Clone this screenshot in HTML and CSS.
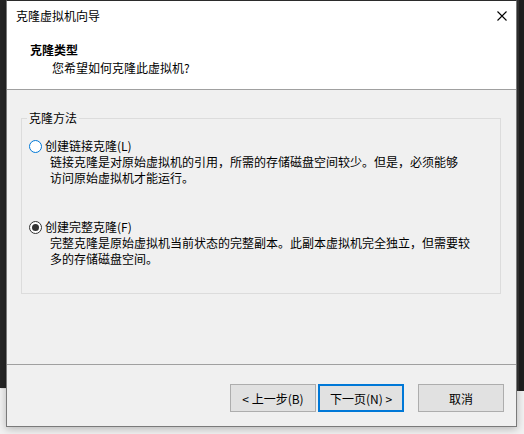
FILE: index.html
```html
<!DOCTYPE html>
<html>
<head>
    <meta charset="utf-8">
    <link rel="stylesheet" href="styles.css">
</head>
<body>
    <!-- windows behind the dialog -->
    <div class="backwin backwin-left"></div>
    <div class="backwin backwin-right"></div>

    <div class="dialog">
        <div class="titlebar">
            <span class="title">克隆虚拟机向导</span>
            <svg class="close" width="10" height="10" viewBox="0 0 10 10">
                <path d="M0.5 0.5 L9.5 9.5 M9.5 0.5 L0.5 9.5" stroke="#000" stroke-width="1.1" fill="none"/>
            </svg>
        </div>

        <div class="header">
            <div class="header-title">克隆类型</div>
            <div class="header-sub">您希望如何克隆此虚拟机?</div>
        </div>

        <div class="body">
            <fieldset class="group">
                <legend>克隆方法</legend>

                <div class="option first">
                    <div class="option-label">
                        <span class="radio hover"></span>
                        <span>创建链接克隆(L)</span>
                    </div>
                    <div class="option-desc">链接克隆是对原始虚拟机的引用，所需的存储磁盘空间较少。但是，必须能够<br>访问原始虚拟机才能运行。</div>
                </div>

                <div class="option second">
                    <div class="option-label">
                        <span class="radio checked"></span>
                        <span>创建完整克隆(F)</span>
                    </div>
                    <div class="option-desc">完整克隆是原始虚拟机当前状态的完整副本。此副本虚拟机完全独立，但需要较<br>多的存储磁盘空间。</div>
                </div>
            </fieldset>
        </div>

        <div class="footer">
            <button class="button">&lt; 上一步(B)</button>
            <button class="button default">下一页(N) &gt;</button>
            <button class="button cancel">取消</button>
        </div>
    </div>
</body>
</html>
```

FILE: styles.css
```css
body {
    margin: 0;
    width: 524px;
    height: 434px;
    background: #f2f2f2;
    font-family: "Noto Sans CJK SC", "Microsoft YaHei UI", sans-serif;
    font-size: 12px;
    color: #000;
    overflow: hidden;
    position: relative;
}
.backwin {
    position: absolute;
    top: 0;
    background: #262626;
}
.backwin-left {
    left: 0;
    width: 6px;
    height: 388px;
    box-shadow: 1px 0 1px rgba(0,0,0,0.4);
}
.backwin-right {
    left: 516px;
    width: 8px;
    height: 391px;
    background: linear-gradient(to right, #333 0, #333 3px, #1f1f1f 3px);
}
.dialog {
    position: absolute;
    left: 6px;
    top: 0;
    width: 511px;
    height: 427px;
    box-sizing: border-box;
    border: 1px solid #7a7a7a;
    border-top-color: #2b2b2b;
    background: #f0f0f0;
    box-shadow: 0 2px 8px rgba(0,0,0,0.25);
    display: flex;
    flex-direction: column;
}
.titlebar {
    height: 30px;
    background: #fff;
    display: flex;
    align-items: center;
    justify-content: space-between;
    padding: 0 9px 0 9px;
}
.title {
    line-height: 16px;
}
.header {
    height: 59px;
    box-sizing: border-box;
    background: #fff;
    border-bottom: 1px solid #a0a0a0;
    padding-top: 11px;
}
.header-title {
    font-weight: bold;
    line-height: 16px;
    padding-left: 23px;
}
.header-sub {
    line-height: 16px;
    margin-top: 2px;
    padding-left: 45px;
}
.body {
    height: 274px;
    padding-top: 20px;
    box-sizing: border-box;
}
.group {
    margin: 0 15px 0 14px;
    padding: 0 0 26px 7px;
    border: 1px solid #dcdcdc;
    min-width: 0;
}
.group legend {
    padding: 0 2px;
    margin-left: -2px;
    line-height: 16px;
}
.option.first {
    margin-top: 12px;
}
.option.second {
    margin-top: 33px;
}
.option-label {
    display: flex;
    align-items: center;
    gap: 3px;
    height: 16px;
    line-height: 16px;
}
.option-desc {
    margin-left: 21px;
    line-height: 16px;
    white-space: nowrap;
}
.radio {
    width: 13px;
    height: 13px;
    box-sizing: border-box;
    border-radius: 50%;
    border: 1px solid #333;
    background: #fff;
    position: relative;
}
.radio.hover {
    border-color: #0078d7;
}
.radio.checked::after {
    content: "";
    position: absolute;
    left: 2px;
    top: 2px;
    width: 7px;
    height: 7px;
    border-radius: 50%;
    background: #333;
}
.footer {
    border-top: 1px solid #a0a0a0;
    padding: 19px 12px 14px 0;
    display: flex;
    justify-content: flex-end;
    gap: 2px;
}
.button {
    width: 86px;
    height: 28px;
    box-sizing: border-box;
    background: #e1e1e1;
    border: 1px solid #adadad;
    font-family: inherit;
    font-size: 12px;
    color: #000;
    padding: 0;
    margin: 0;
}
.button.default {
    border: 2px solid #0078d7;
}
.button.cancel {
    margin-left: 12px;
}
```
